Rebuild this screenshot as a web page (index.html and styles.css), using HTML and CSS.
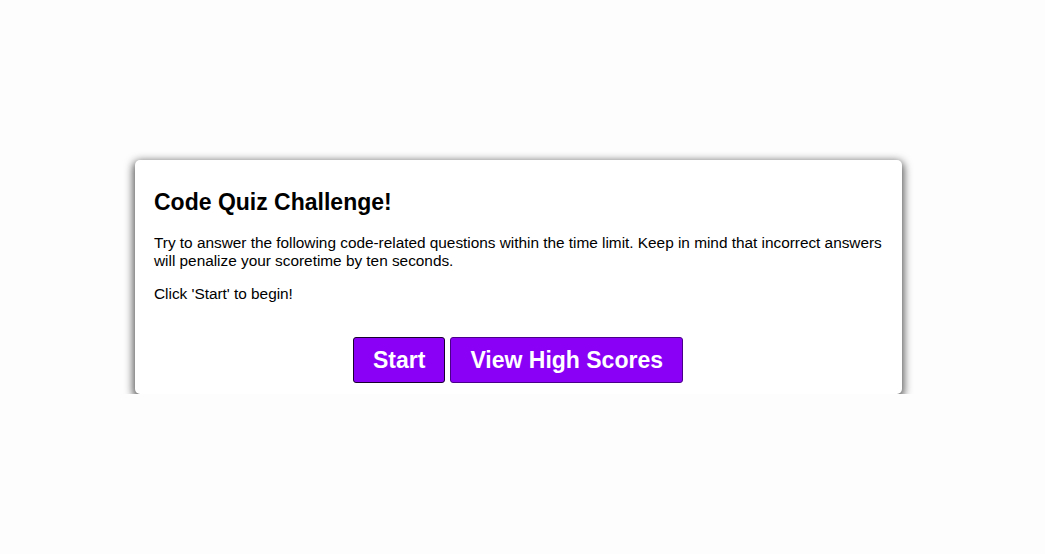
FILE: index.html
```html
<!DOCTYPE html>
<html lang="en">
<head>
<meta charset="utf-8">
<title>Code Quiz</title>
<link rel="stylesheet" href="styles.css">
</head>
<body>
<main class="page">
  <section class="card">
    <h1 class="title">Code Quiz Challenge!</h1>
    <p class="text">Try to answer the following code-related questions within the time limit. Keep in mind that incorrect answers will penalize your scoretime by ten seconds.</p>
    <p class="text">Click 'Start' to begin!</p>
    <div class="actions">
      <button class="btn btn-start">Start</button>
      <button class="btn">View High Scores</button>
    </div>
  </section>
</main>
</body>
</html>
```

FILE: styles.css
```css
html, body {
  margin: 0;
  padding: 0;
  background: #fdfdfd;
}
body {
  font-family: "Liberation Sans", Arial, Helvetica, sans-serif;
  color: #000;
}
.page {
  padding-top: 160px;
  padding-left: 135px;
}
.card {
  box-sizing: border-box;
  width: 767px;
  height: 234px;
  background: #fff;
  border-radius: 5px;
  box-shadow: 0 3px 8px 2px rgba(0, 0, 0, 0.65);
  padding: 28px 12px 11px 19px;
}
.title {
  font-size: 23px;
  font-weight: bold;
  margin: 0 0 18px 0;
  line-height: 28px;
}
.text {
  font-size: 15.4px;
  letter-spacing: -0.02px;
  line-height: 18px;
  margin: 0 0 15px 0;
}
.actions {
  display: flex;
  justify-content: center;
  gap: 5px;
  margin-top: 34px;
  padding-right: 8px;
}
.btn {
  box-sizing: border-box;
  height: 46px;
  padding: 0 19px;
  background: #8a00f7;
  color: #fff;
  border: 1px solid #4a0088;
  border-radius: 3px;
  font-family: "Liberation Sans", Arial, Helvetica, sans-serif;
  font-weight: bold;
  font-size: 23px;
}
.btn-start {
  border-color: #1a0030;
}
```
